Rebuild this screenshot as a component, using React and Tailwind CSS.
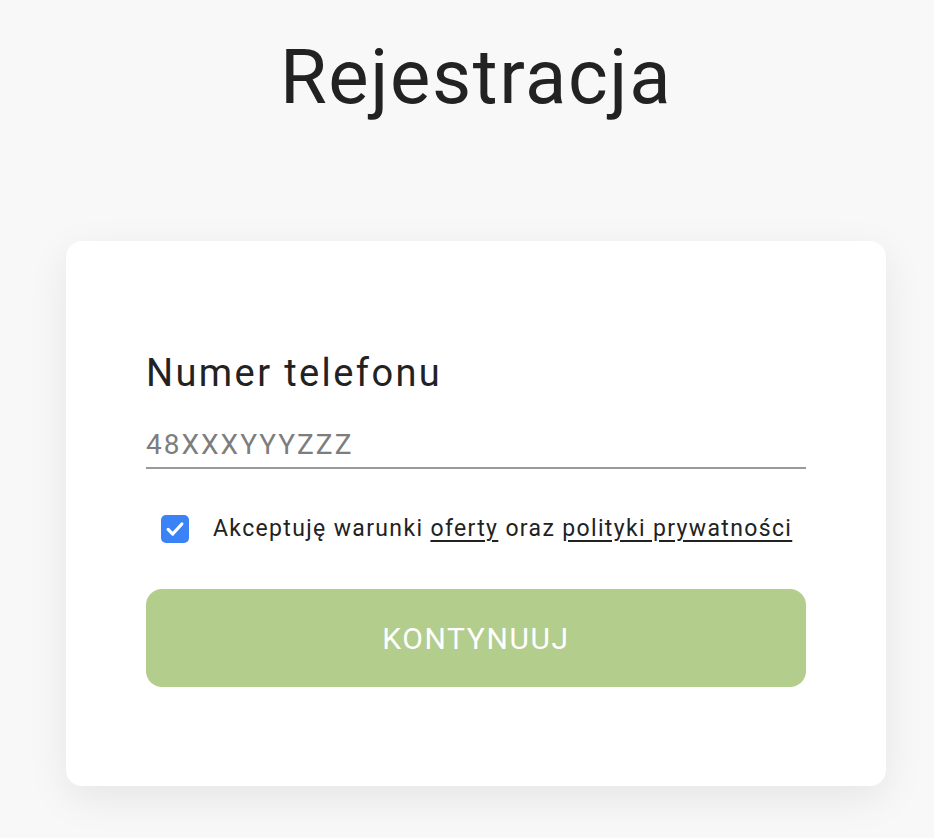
import React, { useState } from 'react';

export default function App() {
  const [phone, setPhone] = useState('');
  const [accepted, setAccepted] = useState(true);

  return (
    <div className="min-h-screen bg-[#f8f8f8] pl-[18px] font-['Roboto',sans-serif] text-[#212121]">
      <div className="flex flex-col items-center">
        {/* Title */}
        <h1 className="mt-[32px] text-[76px] leading-[90px] tracking-[1.6px] text-[#222]">Rejestracja</h1>

        {/* Form card */}
        <div className="mt-[119px] w-[820px] h-[545px] bg-white rounded-[16px] shadow-[0_12px_40px_rgba(0,0,0,0.08)] px-[80px] pt-[112px]">
          <label className="block text-[38px] leading-[40px] tracking-[2.4px] text-[#222]">Numer telefonu</label>
          <input
            type="tel"
            value={phone}
            onChange={(e) => setPhone(e.target.value)}
            placeholder="48XXXYYYZZZ"
            className="mt-[34px] w-full border-b-2 border-[#9a9a9a] pb-[4px] text-[28px] leading-[36px] tracking-[2px] outline-none placeholder:text-[#7d7d7d] bg-transparent"
          />

          <label className="mt-[46px] flex items-center pl-[15px] text-[23px] leading-[28px] tracking-[1.35px] text-[#222] cursor-pointer">
            <span
              onClick={() => setAccepted(!accepted)}
              className={`w-[28px] h-[28px] shrink-0 rounded-[5px] flex items-center justify-center ${accepted ? 'bg-[#3b82f6]' : 'border-2 border-gray-400'}`}
            >
              {accepted && (
                <svg width="22" height="22" viewBox="0 0 24 24" fill="none" stroke="white" strokeWidth="3.5" strokeLinecap="round" strokeLinejoin="round">
                  <path d="M4.5 12.5l5 5L19.5 6.5" />
                </svg>
              )}
            </span>
            <span className="ml-[24px]">
              Akceptuję warunki <a className="underline underline-offset-[4px]">oferty</a> oraz{' '}
              <a className="underline underline-offset-[4px]">polityki prywatności</a>
            </span>
          </label>

          <button className="mt-[46px] w-full h-[98px] rounded-[16px] bg-[#b2cd8c] text-white text-[30px] tracking-[1.6px]">
            KONTYNUUJ
          </button>
        </div>
      </div>
    </div>
  );
}
